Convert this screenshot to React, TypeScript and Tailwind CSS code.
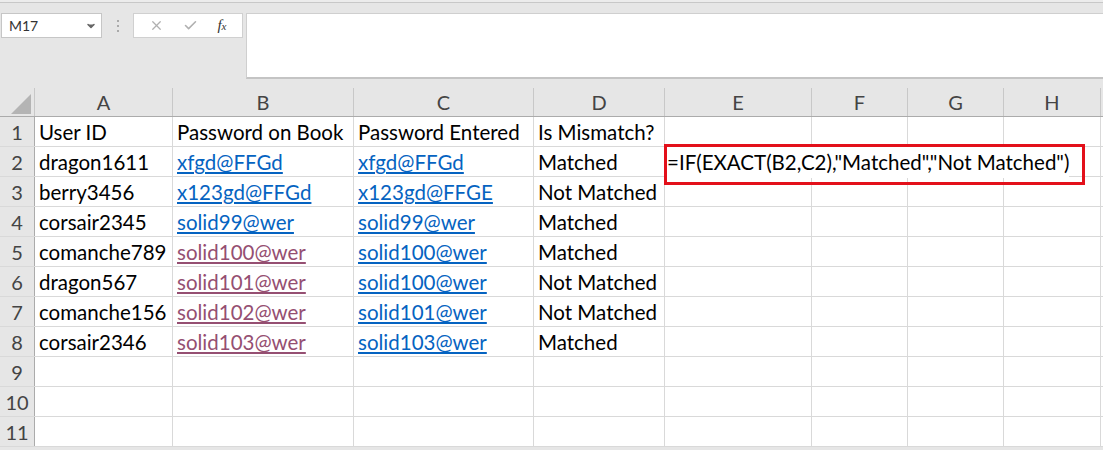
import { ChevronDown, X, Check } from 'lucide-react'

const cols = ['A', 'B', 'C', 'D', 'E', 'F', 'G', 'H']
const widths = [138, 181, 180, 131, 147, 96, 96, 97]

type Cell = { text: string; kind?: 'link' | 'visited' }

const rows: Cell[][] = [
  [{ text: 'User ID' }, { text: 'Password on Book' }, { text: 'Password Entered' }, { text: 'Is Mismatch?' }],
  [{ text: 'dragon1611' }, { text: 'xfgd@FFGd', kind: 'link' }, { text: 'xfgd@FFGd', kind: 'link' }, { text: 'Matched' }],
  [{ text: 'berry3456' }, { text: 'x123gd@FFGd', kind: 'link' }, { text: 'x123gd@FFGE', kind: 'link' }, { text: 'Not Matched' }],
  [{ text: 'corsair2345' }, { text: 'solid99@wer', kind: 'link' }, { text: 'solid99@wer', kind: 'link' }, { text: 'Matched' }],
  [{ text: 'comanche789' }, { text: 'solid100@wer', kind: 'visited' }, { text: 'solid100@wer', kind: 'link' }, { text: 'Matched' }],
  [{ text: 'dragon567' }, { text: 'solid101@wer', kind: 'visited' }, { text: 'solid100@wer', kind: 'link' }, { text: 'Not Matched' }],
  [{ text: 'comanche156' }, { text: 'solid102@wer', kind: 'visited' }, { text: 'solid101@wer', kind: 'link' }, { text: 'Not Matched' }],
  [{ text: 'corsair2346' }, { text: 'solid103@wer', kind: 'visited' }, { text: 'solid103@wer', kind: 'link' }, { text: 'Matched' }],
  [],
  [],
  [],
]

const kindClass = {
  link: 'text-[#0563c1] underline underline-offset-2',
  visited: 'text-[#954f72] underline underline-offset-2',
}

export default function App() {
  return (
    <div
      className="w-[1103px] h-[450px] overflow-hidden bg-[#e6e6e6] text-black"
      style={{ fontFamily: 'Lato, "Open Sans", sans-serif' }}
    >
      {/* Formula bar */}
      <div className="h-[3px] border-b border-[#c8c8c8] bg-[#ececec]" />
      <div className="flex h-[85px] pt-[10px]">
        <div className="ml-[1px] w-[101px] h-[25px] bg-white border border-[#c6c6c6] flex items-center pl-[7px] pr-[4px] text-[14px] text-[#333]">
          <span className="flex-1">M17</span>
          <ChevronDown className="w-3 h-3 text-[#666] fill-[#666]" strokeWidth={3} />
        </div>
        <div className="w-[31px] flex flex-col items-center justify-center gap-[3px] h-[25px]">
          <span className="w-[2px] h-[2px] bg-[#aaa]" />
          <span className="w-[2px] h-[2px] bg-[#aaa]" />
          <span className="w-[2px] h-[2px] bg-[#aaa]" />
        </div>
        <div className="w-[110px] h-[25px] bg-white border border-[#d0d0d0] flex items-center justify-around px-[6px]">
          <X className="w-[15px] h-[15px] text-[#b0b0b0]" strokeWidth={2} />
          <Check className="w-[15px] h-[15px] text-[#b0b0b0]" strokeWidth={2.5} />
          <span className="text-[15px] italic text-[#333]" style={{ fontFamily: '"Liberation Serif", serif' }}>
            f<span className="text-[11px]">x</span>
          </span>
        </div>
        <div className="ml-[3px] flex-1 h-[66px] bg-white border-t border-l border-[#cfcfcf] border-b-2 border-b-[#c4c4c4]" />
      </div>

      {/* Sheet */}
      <div className="relative bg-white">
        <div className="flex h-[29px] bg-[#e6e6e6] border-b border-[#ababab]">
          <div className="w-[35px] shrink-0 border-r border-[#c8c8c8] relative">
            <svg className="absolute left-[11px] top-[6px]" width="20" height="20" viewBox="0 0 20 20">
              <polygon points="20,0 20,20 0,20" fill="#b4b4b4" />
            </svg>
          </div>
          {cols.map((c, i) => (
            <div
              key={c}
              style={{ width: widths[i] }}
              className="shrink-0 border-r border-[#c8c8c8] flex items-center justify-center text-[20px] text-[#444]"
            >
              {c}
            </div>
          ))}
          <div className="flex-1" />
        </div>

        {rows.map((r, ri) => (
          <div key={ri} className="flex h-[30px] border-b border-[#d9d9d9]">
            <div className="w-[35px] shrink-0 bg-[#e6e6e6] border-r border-[#ababab] flex items-center justify-center text-[20px] text-[#444]">
              {ri + 1}
            </div>
            {widths.map((w, ci) => {
              const cell = r[ci]
              return (
                <div
                  key={ci}
                  style={{ width: w }}
                  className="shrink-0 border-r border-[#d9d9d9] flex items-center pl-[4px] pt-[2px] text-[20.5px] whitespace-nowrap overflow-visible"
                >
                  {cell && <span className={cell.kind ? kindClass[cell.kind] : ''}>{cell.text}</span>}
                  {ri === 1 && ci === 4 && (
                    <span className="relative z-10 -ml-[2px] bg-white">=IF(EXACT(B2,C2),"Matched","Not Matched")</span>
                  )}
                </div>
              )
            })}
            <div className="flex-1" />
          </div>
        ))}

        {/* highlight box */}
        <div className="absolute left-[664px] top-[56px] w-[421px] h-[41px] border-[3px] border-[#e3101a] z-20 pointer-events-none" />
      </div>
    </div>
  )
}
